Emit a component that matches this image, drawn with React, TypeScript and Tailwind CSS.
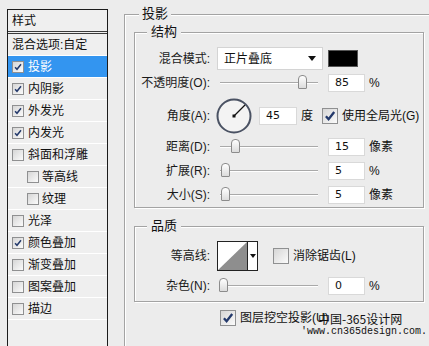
import React from "react";

const layers = [
  { label: "投影", checked: true, selected: true },
  { label: "内阴影", checked: true },
  { label: "外发光", checked: true },
  { label: "内发光", checked: true },
  { label: "斜面和浮雕" },
  { label: "等高线", indent: true },
  { label: "纹理", indent: true },
  { label: "光泽" },
  { label: "颜色叠加", checked: true },
  { label: "渐变叠加" },
  { label: "图案叠加" },
  { label: "描边" },
];

const CheckBox = ({ checked = false, big = false }: { checked?: boolean; big?: boolean }) => (
  <span
    className={`relative shrink-0 border border-[#8f9091] bg-gradient-to-br from-[#d6d6d6] to-[#fbfbfb] ${
      big ? "w-[16px] h-[16px]" : "w-[12px] h-[12px]"
    }`}
  >
    {checked && (
      <svg viewBox="0 0 12 12" className="absolute inset-0 w-full h-full">
        <path d="M2.5 6.2 L4.8 8.8 L9.6 2.6" fill="none" stroke="#23396b" strokeWidth={big ? 2 : 1.8} />
      </svg>
    )}
  </span>
);

// slider track with thumb, thumb pos in px from track start
const Slider = ({ pos }: { pos: number }) => (
  <div className="relative ml-[10px] w-[98px] h-[19px] flex items-center">
    <div className="w-full h-[2px] border-t border-[#a9a9a9] border-b border-b-white" />
    <div
      className="absolute top-[2px] w-[9px] h-[14px] rounded-t-[4px] rounded-b-[1px] border border-[#8c8c8c] bg-gradient-to-b from-white to-[#dcdcdc]"
      style={{ left: pos }}
    />
  </div>
);

const NumInput = ({ value, w = 37, ml = 10 }: { value: string; w?: number; ml?: number }) => (
  <div
    className="h-[18px] bg-white border border-[#d9d9d9] pl-[6px] flex items-center text-[11px] text-[#111] font-['DejaVu_Sans',sans-serif]"
    style={{ width: w, marginLeft: ml }}
  >
    {value}
  </div>
);

const Label = ({ text }: { text: string }) => (
  <div className="w-[75px] shrink-0 text-right text-[#1a1a1a]">{text}</div>
);

export default function App() {
  return (
    <div className="relative w-[429px] h-[346px] overflow-hidden bg-[#ececec] flex text-[12px] leading-[14px] text-[#111] font-['Liberation_Sans','Noto_Sans_CJK_SC',sans-serif]">
      {/* left styles list */}
      <div className="shrink-0 ml-[7px] mt-[9px] w-[101px] h-[400px] border border-[#1c1c1c] bg-[#efefef]">
        <div className="h-[24px] pl-[4px] flex items-center border-b-[3px] border-double border-[#3a3a3a]">样式</div>
        <div className="h-[22px] pl-[4px] flex items-center border-b border-white">混合选项:自定</div>
        {layers.map((l, i) => (
          <div
            key={i}
            className={`h-[22px] flex items-center border-b border-white ${
              l.indent ? "pl-[19px] gap-[3px]" : "pl-[4px] gap-[4px]"
            } ${l.selected ? "bg-[#3395f0] text-white" : ""}`}
          >
            <CheckBox checked={l.checked} />
            <span>{l.label}</span>
          </div>
        ))}
      </div>

      {/* right settings */}
      <div className="flex-1">
        <fieldset className="ml-[16px] mt-[6px] w-[330px] h-[420px] border-l border-t border-[#a3a3a3] shadow-[inset_1px_1px_0_#fff] pl-[9px]">
          <legend className="ml-[5px] px-[3px] leading-[16px] text-[13px] bg-[#ececec]">投影</legend>

          <fieldset className="mt-[2px] w-[290px] border border-[#a3a3a3] shadow-[inset_1px_1px_0_#fff,1px_1px_0_#fff] pb-[3px]">
            <legend className="ml-[12px] px-[4px] leading-[16px] text-[13px] bg-[#ececec]">结构</legend>

            <div className="mt-[7px] h-[23px] flex items-center">
              <Label text="混合模式:" />
              <div className="ml-[7px] w-[106px] h-[23px] bg-white border border-[#d4d4d4] flex items-center pl-[6px] pr-[6px] justify-between">
                <span>正片叠底</span>
                <svg width="8" height="5" viewBox="0 0 8 5">
                  <path d="M0 0 H8 L4 5 Z" fill="#111" />
                </svg>
              </div>
              <div className="ml-[5px] w-[30px] h-[17px] bg-black border border-[#555]" />
            </div>

            <div className="mt-[3px] h-[19px] flex items-center">
              <Label text="不透明度(O):" />
              <Slider pos={78} />
              <NumInput value="85" />
              <span className="ml-[4px]">%</span>
            </div>

            <div className="mt-[6px] h-[35px] flex items-center">
              <Label text="角度(A):" />
              <svg width="36" height="36" viewBox="0 0 36 36" className="ml-[6px] shrink-0">
                <circle cx="18" cy="18" r="16.5" fill="#f3f3f3" stroke="#4a5263" strokeWidth="2" />
                <line x1="18" y1="18" x2="29" y2="7" stroke="#111" strokeWidth="1.2" />
                <rect x="16.5" y="16.5" width="3" height="3" fill="#111" />
              </svg>
              <NumInput value="45" w={38} ml={7} />
              <span className="ml-[4px]">度</span>
              <span className="ml-[9px] flex items-center gap-[4px]">
                <CheckBox checked big />
                <span>使用全局光(G)</span>
              </span>
            </div>

            <div className="mt-[4px] h-[19px] flex items-center">
              <Label text="距离(D):" />
              <Slider pos={11} />
              <NumInput value="15" />
              <span className="ml-[4px]">像素</span>
            </div>

            <div className="mt-[5px] h-[19px] flex items-center">
              <Label text="扩展(R):" />
              <Slider pos={1} />
              <NumInput value="5" />
              <span className="ml-[4px]">%</span>
            </div>

            <div className="mt-[5px] h-[19px] flex items-center">
              <Label text="大小(S):" />
              <Slider pos={1} />
              <NumInput value="5" />
              <span className="ml-[4px]">像素</span>
            </div>
          </fieldset>

          <fieldset className="mt-[10px] w-[290px] border border-[#a3a3a3] shadow-[inset_1px_1px_0_#fff,1px_1px_0_#fff] pb-[6px]">
            <legend className="ml-[12px] px-[4px] leading-[16px] text-[13px] bg-[#ececec]">品质</legend>

            <div className="mt-[7px] h-[30px] flex items-center">
              <Label text="等高线:" />
              <div className="ml-[7px] h-[30px] flex border border-[#222] bg-white">
                <svg width="29" height="28" viewBox="0 0 29 28" className="block">
                  <rect width="29" height="28" fill="#fff" />
                  <path d="M0 28 L29 0 L29 28 Z" fill="#8e8e8e" />
                </svg>
                <div className="w-[10px] border-l border-[#222] flex items-center justify-center">
                  <svg width="6" height="4" viewBox="0 0 6 4">
                    <path d="M0 0 H6 L3 4 Z" fill="#111" />
                  </svg>
                </div>
              </div>
              <span className="ml-[15px] flex items-center gap-[4px]">
                <CheckBox big />
                <span>消除锯齿(L)</span>
              </span>
            </div>

            <div className="mt-[5px] h-[19px] flex items-center">
              <Label text="杂色(N):" />
              <Slider pos={-1} />
              <NumInput value="0" />
              <span className="ml-[4px]">%</span>
            </div>
          </fieldset>

          <div className="mt-[8px] ml-[86px] flex items-center gap-[4px]">
            <CheckBox checked big />
            <span>图层挖空投影(U)</span>
          </div>
        </fieldset>
      </div>

      {/* watermark */}
      <div className="absolute left-[318px] top-[312px] text-[12px] leading-[14px] text-[#111] font-['Noto_Sans_CJK_SC',sans-serif]">
        中国-365设计网
      </div>
      <div className="absolute left-[301px] top-[326px] text-[10px] leading-[12px] text-[#111] font-['Liberation_Mono',monospace]">
        'www.cn365design.com.
      </div>
    </div>
  );
}
